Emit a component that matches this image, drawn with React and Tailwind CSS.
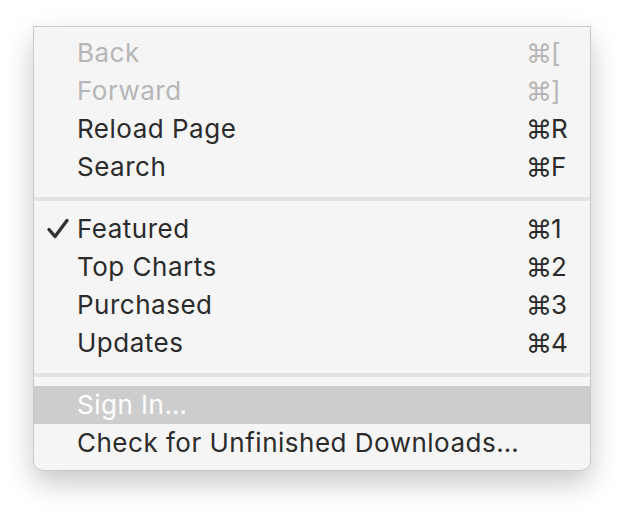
const groups = [
  [
    { label: 'Back', key: '[', disabled: true },
    { label: 'Forward', key: ']', disabled: true },
    { label: 'Reload Page', key: 'R' },
    { label: 'Search', key: 'F' },
  ],
  [
    { label: 'Featured', key: '1', checked: true },
    { label: 'Top Charts', key: '2' },
    { label: 'Purchased', key: '3' },
    { label: 'Updates', key: '4' },
  ],
  [
    { label: 'Sign In…', highlighted: true },
    { label: 'Check for Unfinished Downloads…' },
  ],
];

function Check() {
  return (
    <svg width="24" height="24" viewBox="0 0 24 24" className="absolute left-[12px] top-[7px]">
      <polyline points="3,12.5 9,19.5 21,3.5" fill="none" stroke="#333" strokeWidth="3.4" strokeLinecap="round" strokeLinejoin="round" />
    </svg>
  );
}

function MenuItem({ item }) {
  let tone = 'text-[#2b2b2b]';
  if (item.disabled) tone = 'text-[#b6b6b6]';
  if (item.highlighted) tone = 'text-white';
  return (
    <div className={`relative flex items-center h-[38px] pl-[43px] ${item.highlighted ? 'bg-[#cdcdcd]' : ''} ${tone}`}>
      {item.checked && <Check />}
      <span className="flex-1 leading-none">{item.label}</span>
      {item.key && (
        <span className="w-[64px] flex items-baseline leading-none">
          <span className="font-['DejaVu_Sans'] text-[26px] tracking-normal w-[25px] relative top-[1px]">⌘</span>
          <span>{item.key}</span>
        </span>
      )}
    </div>
  );
}

export default function App() {
  return (
    <div className="w-[624px] h-[512px] bg-white pt-[26px] pl-[33px] font-['Inter','Liberation_Sans',sans-serif] text-[26px] tracking-[0.5px]">
      <div className="w-[558px] bg-[#f5f5f5] border border-[#c9c9c9] rounded-b-[10px] pt-[7px] pb-[8px] shadow-[0_12px_28px_rgba(0,0,0,0.22)]">
        {groups.map((g, i) => (
          <div key={i}>
            {i > 0 && (
              <div className="pt-[11px] pb-[9px]">
                <div className="h-[4px] bg-[#e3e3e3]" />
              </div>
            )}
            {g.map(item => <MenuItem key={item.label} item={item} />)}
          </div>
        ))}
      </div>
    </div>
  );
}
